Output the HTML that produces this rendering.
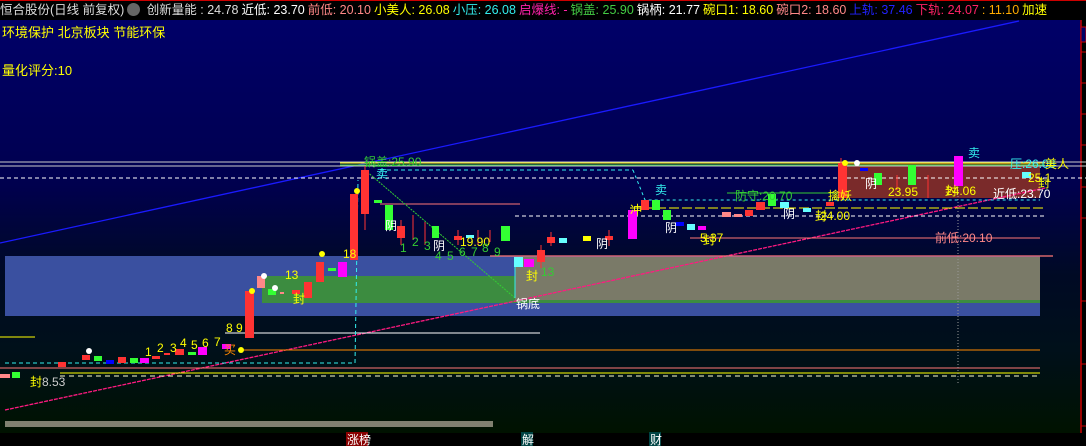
<!DOCTYPE html>
<html><head><meta charset="utf-8"><style>
html,body{margin:0;padding:0;background:#000;}
body{width:1086px;height:446px;overflow:hidden;position:relative;font-family:"Liberation Sans","Noto Sans CJK SC",sans-serif;}
#top{position:absolute;left:0;top:0;width:1086px;height:20px;background:#000;border-top:1px solid #c00;box-sizing:border-box;font-size:12.5px;line-height:19px;white-space:nowrap;color:#ddd;overflow:hidden;}
#top span{margin-right:3px}
#chart{position:absolute;left:0;top:20px;width:1081px;height:413px;background:linear-gradient(#000068 0%,#00004e 40%,#000a24 62%,#00101a 80%,#001200 100%);}
svg text{font-family:"Liberation Sans","Noto Sans CJK SC",sans-serif;}
</style></head><body>
<div id="top"><span style="color:#ddd">恒合股份(日线 前复权)</span><span style="display:inline-block;width:13px;height:13px;border-radius:50%;background:#666;vertical-align:-2px"></span> <span style="color:#ddd">创新量能 : 24.78</span><span style="color:#fff">近低: 23.70</span><span style="color:#f88">前低: 20.10</span><span style="color:#ff0">小美人: 26.08</span><span style="color:#3ee">小压: 26.08</span><span style="color:#f2a">启爆线: -</span><span style="color:#4c4">锅盖: 25.90</span><span style="color:#fff">锅柄: 21.77</span><span style="color:#ff0">碗口1: 18.60</span><span style="color:#f88">碗口2: 18.60</span><span style="color:#22f">上轨: 37.46</span><span style="color:#f26">下轨: 24.07</span><span style="color:#fa0">: 11.10</span><span style="color:#ff0">加速</span></div>
<div id="chart"></div>
<svg style="position:absolute;left:0;top:0" width="1086" height="446" viewBox="0 0 1086 446">
<line x1="1081" y1="20" x2="1081" y2="433" stroke="#c00" stroke-width="1.5"/>
<g stroke="#c00"><line x1="1081" y1="52" x2="1086" y2="52"/><line x1="1081" y1="83" x2="1086" y2="83"/><line x1="1081" y1="114" x2="1086" y2="114"/><line x1="1081" y1="145" x2="1086" y2="145"/><line x1="1081" y1="187" x2="1086" y2="187"/><line x1="1081" y1="218" x2="1086" y2="218"/><line x1="1081" y1="301" x2="1086" y2="301"/><line x1="1081" y1="364" x2="1086" y2="364"/><line x1="1081" y1="426" x2="1086" y2="426"/></g>
<rect x="1081" y="27" width="5" height="15" fill="#000066" stroke="#c00"/>
<text x="2" y="37" fill="#ff0" font-size="13">环境保护 北京板块 节能环保</text>
<text x="2" y="75" fill="#ff0" font-size="13">量化评分:10</text>
<rect x="5" y="256" width="1035" height="60" fill="#3a50a0"/>
<rect x="262" y="276" width="253" height="27" fill="#3c8c40"/>
<rect x="515" y="257" width="525" height="46" fill="#7a7a68"/>
<rect x="515" y="300" width="525" height="3" fill="#3c8c40"/>
<rect x="5" y="421" width="488" height="6" fill="#808070"/>
<rect x="838" y="163" width="202" height="35" fill="#7a2a2a"/>
<line x1="0" y1="243" x2="1019" y2="21" stroke="#1a1aff" stroke-width="1.3"/>
<line x1="5" y1="410" x2="1045" y2="188" stroke="#ff1a80" stroke-width="1.3" stroke-dasharray="4 1"/>
<line x1="0" y1="162" x2="1086" y2="162" stroke="#ccc"/>
<line x1="0" y1="166" x2="1086" y2="166" stroke="#ccc"/>
<line x1="340" y1="163" x2="1045" y2="163" stroke="#ff0"/>
<line x1="340" y1="165" x2="1045" y2="165" stroke="#3c3"/>
<line x1="0" y1="178" x2="1086" y2="178" stroke="#fff" stroke-dasharray="4 3"/>
<line x1="380" y1="170" x2="633" y2="170" stroke="#3ee" stroke-dasharray="4 3"/>
<polyline points="633,170 645,200 1040,200" fill="none" stroke="#3ee" stroke-dasharray="3 3"/>
<line x1="630" y1="208" x2="1045" y2="208" stroke="#ff0" stroke-dasharray="10 3"/>
<line x1="515" y1="216" x2="1045" y2="216" stroke="#fff" stroke-dasharray="4 3"/>
<line x1="380" y1="204" x2="520" y2="204" stroke="#f77"/>
<line x1="690" y1="238" x2="1040" y2="238" stroke="#f77"/>
<line x1="490" y1="256" x2="1053" y2="256" stroke="#f77" stroke-width="1.3"/>
<line x1="727" y1="193" x2="840" y2="193" stroke="#3c3"/>
<line x1="225" y1="333" x2="540" y2="333" stroke="#fff"/>
<line x1="240" y1="350" x2="1040" y2="350" stroke="#f80"/>
<line x1="0" y1="368" x2="1040" y2="368" stroke="#f77"/>
<line x1="60" y1="373" x2="1040" y2="373" stroke="#ff0"/>
<line x1="60" y1="376" x2="1040" y2="376" stroke="#ffc" stroke-dasharray="5 4"/>
<line x1="5" y1="363" x2="355" y2="363" stroke="#3ee" stroke-dasharray="4 3"/>
<line x1="355" y1="363" x2="358" y2="180" stroke="#3ee" stroke-dasharray="4 3"/>
<line x1="0" y1="337" x2="35" y2="337" stroke="#ff0"/>
<line x1="958" y1="160" x2="958" y2="385" stroke="#999" stroke-dasharray="1 2"/>
<line x1="365" y1="170" x2="515" y2="298" stroke="#3c3" stroke-dasharray="2 1"/>
<line x1="515" y1="262" x2="515" y2="298" stroke="#3ee"/>
<g stroke="#f33"><line x1="365" y1="166" x2="365" y2="230"/><line x1="401" y1="220" x2="401" y2="245"/><line x1="413" y1="215" x2="413" y2="240"/><line x1="425" y1="222" x2="425" y2="245"/><line x1="458" y1="230" x2="458" y2="245"/><line x1="478" y1="230" x2="478" y2="245"/><line x1="490" y1="230" x2="490" y2="242"/><line x1="541" y1="245" x2="541" y2="268"/><line x1="551" y1="232" x2="551" y2="246"/><line x1="609" y1="230" x2="609" y2="246"/><line x1="841" y1="158" x2="841" y2="200"/><line x1="897" y1="175" x2="897" y2="190"/><line x1="928" y1="175" x2="928" y2="198"/></g>
<g>
<rect x="0" y="374" width="10" height="4" fill="#f88"/>
<rect x="12" y="372" width="8" height="6" fill="#3f3"/>
<rect x="58" y="362" width="8" height="5" fill="#f33"/>
<rect x="82" y="355" width="8" height="5" fill="#f33"/>
<rect x="94" y="356" width="8" height="5" fill="#3f3"/>
<rect x="106" y="360" width="8" height="4" fill="#00f"/>
<rect x="118" y="357" width="8" height="6" fill="#f33"/>
<rect x="130" y="358" width="8" height="5" fill="#3f3"/>
<rect x="140" y="358" width="9" height="5" fill="#f0f"/>
<rect x="152" y="356" width="8" height="3" fill="#f33"/>
<rect x="164" y="353" width="6" height="2" fill="#f33"/>
<rect x="175" y="349" width="9" height="6" fill="#f33"/>
<rect x="188" y="352" width="8" height="3" fill="#3f3"/>
<rect x="198" y="347" width="9" height="8" fill="#f0f"/>
<rect x="222" y="344" width="9" height="5" fill="#f0f"/>
<rect x="245" y="291" width="9" height="47" fill="#f33"/>
<rect x="257" y="276" width="8" height="12" fill="#f88"/>
<rect x="268" y="289" width="8" height="6" fill="#3f3"/>
<rect x="280" y="292" width="4" height="2" fill="#f88"/>
<rect x="292" y="290" width="8" height="4" fill="#f33"/>
<rect x="304" y="282" width="8" height="16" fill="#f33"/>
<rect x="316" y="262" width="8" height="20" fill="#f33"/>
<rect x="328" y="268" width="8" height="3" fill="#3f3"/>
<rect x="338" y="262" width="9" height="15" fill="#f0f"/>
<rect x="350" y="194" width="8" height="66" fill="#f33"/>
<rect x="361" y="170" width="8" height="44" fill="#f33"/>
<rect x="374" y="200" width="8" height="3" fill="#3f3"/>
<rect x="385" y="205" width="8" height="25" fill="#3f3"/>
<rect x="397" y="226" width="8" height="12" fill="#f33"/>
<rect x="432" y="226" width="7" height="12" fill="#3f3"/>
<rect x="454" y="236" width="8" height="4" fill="#f33"/>
<rect x="466" y="235" width="8" height="3" fill="#6ff"/>
<rect x="501" y="226" width="9" height="15" fill="#3f3"/>
<rect x="514" y="257" width="9" height="10" fill="#6ff"/>
<rect x="524" y="259" width="10" height="8" fill="#f0f"/>
<rect x="537" y="250" width="8" height="12" fill="#f33"/>
<rect x="547" y="237" width="8" height="6" fill="#f33"/>
<rect x="559" y="238" width="8" height="5" fill="#6ff"/>
<rect x="583" y="236" width="8" height="5" fill="#ff0"/>
<rect x="605" y="236" width="8" height="4" fill="#f33"/>
<rect x="628" y="210" width="9" height="29" fill="#f0f"/>
<rect x="641" y="200" width="8" height="10" fill="#f33"/>
<rect x="652" y="200" width="8" height="10" fill="#3f3"/>
<rect x="663" y="210" width="8" height="10" fill="#3f3"/>
<rect x="676" y="222" width="8" height="4" fill="#00f"/>
<rect x="687" y="224" width="8" height="6" fill="#6ff"/>
<rect x="698" y="226" width="8" height="4" fill="#f0f"/>
<rect x="722" y="212" width="9" height="5" fill="#f88"/>
<rect x="734" y="214" width="8" height="3" fill="#f88"/>
<rect x="745" y="210" width="8" height="6" fill="#f33"/>
<rect x="756" y="202" width="9" height="8" fill="#f33"/>
<rect x="768" y="194" width="8" height="12" fill="#3f3"/>
<rect x="780" y="202" width="9" height="6" fill="#6ff"/>
<rect x="803" y="208" width="8" height="4" fill="#6ff"/>
<rect x="826" y="202" width="8" height="4" fill="#f33"/>
<rect x="838" y="163" width="9" height="35" fill="#f33"/>
<rect x="860" y="168" width="8" height="3" fill="#00f"/>
<rect x="874" y="173" width="8" height="12" fill="#3f3"/>
<rect x="908" y="165" width="8" height="20" fill="#3f3"/>
<rect x="954" y="156" width="9" height="30" fill="#f0f"/>
<rect x="1022" y="172" width="9" height="6" fill="#6ff"/>
</g>
<g fill="#ff0"><circle cx="252" cy="291" r="3"/><circle cx="322" cy="254" r="3"/><circle cx="357" cy="191" r="3"/><circle cx="845" cy="163" r="3"/><circle cx="241" cy="350" r="3"/></g>
<g fill="#fff"><circle cx="89" cy="351" r="3"/><circle cx="264" cy="276" r="3"/><circle cx="275" cy="288" r="3"/><circle cx="857" cy="163" r="3"/></g>
<g font-size="12" fill="#ff0">
<text x="145" y="356">1</text><text x="157" y="352">2</text><text x="170" y="352">3</text><text x="180" y="347">4</text><text x="191" y="349">5</text><text x="202" y="347">6</text><text x="214" y="346">7</text>
<text x="226" y="332">8 9</text><text x="285" y="279">13</text><text x="343" y="258">18</text>
<text x="460" y="246">19.90</text><text x="700" y="242">5.37</text><text x="820" y="220">24.00</text><text x="888" y="196">23.95</text><text x="946" y="195">24.06</text><text x="1028" y="182">25.1</text>
<text x="224" y="354" fill="#f80">买</text><text x="293" y="303">封</text><text x="526" y="280">封</text><text x="703" y="244">封</text><text x="815" y="220">封</text><text x="945" y="195">封</text><text x="1038" y="187">封</text><text x="828" y="200">擒妖</text>
<text x="30" y="386">封</text><text x="42" y="386" fill="#ccc">8.53</text>
</g>
<g font-size="12" fill="#3c3"><text x="400" y="252">1</text><text x="412" y="246">2</text><text x="424" y="250">3</text><text x="435" y="260">4</text><text x="447" y="260">5</text><text x="459" y="256">6</text><text x="471" y="256">7</text><text x="482" y="252">8</text><text x="494" y="256">9</text><text x="541" y="276">13</text>
<text x="364" y="166">锅盖:25.90</text><text x="735" y="200">防守:20.70</text></g>
<g font-size="12" fill="#fff"><text x="385" y="230">阴</text><text x="433" y="250">阴</text><text x="596" y="248">阴</text><text x="665" y="232">阴</text><text x="783" y="218">阴</text><text x="865" y="188">阴</text><text x="516" y="308">锅底</text><text x="993" y="198">近低:23.70</text></g>
<g font-size="12" fill="#f88"><text x="935" y="242">前低:20.10</text></g>
<g font-size="12" fill="#3ee"><text x="376" y="178">卖</text><text x="655" y="194">卖</text><text x="968" y="157">卖</text><text x="1010" y="168">压:26.08</text></g>
<text x="1045" y="168" fill="#ff0" font-size="12">美人</text>
<text x="630" y="214" fill="#ff0" font-size="12">冲</text>
<rect x="0" y="433" width="1086" height="13" fill="#000"/>
<rect x="346" y="432" width="22" height="14" fill="#800"/><text x="347" y="444" fill="#fff" font-size="12">涨榜</text>
<rect x="521" y="432" width="12" height="14" fill="#044"/><text x="522" y="444" fill="#fff" font-size="12">解</text>
<rect x="649" y="432" width="12" height="14" fill="#044"/><text x="650" y="444" fill="#fff" font-size="12">财</text>
</svg>
</body></html>
